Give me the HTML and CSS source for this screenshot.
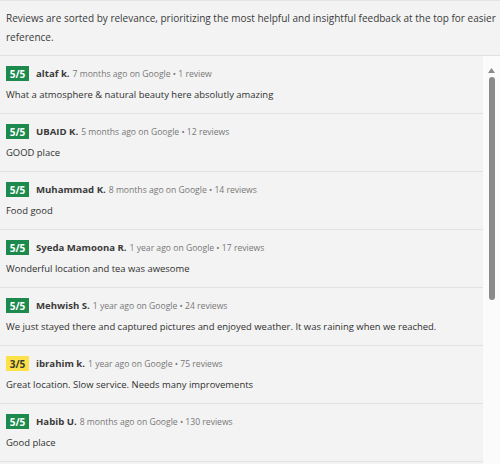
FILE: index.html
```html
<!DOCTYPE html>
<html lang="en">
<head>
<meta charset="utf-8">
<title>Reviews</title>
<link rel="stylesheet" href="styles.css">
</head>
<body>
<div class="panel">
  <p class="intro">Reviews are sorted by relevance, prioritizing the most helpful and insightful feedback at the top for easier reference.</p>
  <div class="list-wrap">
    <ul class="list">
      <li class="review">
        <div class="head"><span class="badge good">5/5</span><span class="name">altaf k.</span><span class="meta">7 months ago on Google • 1 review</span></div>
        <p class="text">What a atmosphere &amp; natural beauty here absolutly amazing</p>
      </li>
      <li class="review">
        <div class="head"><span class="badge good">5/5</span><span class="name">UBAID K.</span><span class="meta">5 months ago on Google • 12 reviews</span></div>
        <p class="text">GOOD place</p>
      </li>
      <li class="review">
        <div class="head"><span class="badge good">5/5</span><span class="name">Muhammad K.</span><span class="meta">8 months ago on Google • 14 reviews</span></div>
        <p class="text">Food good</p>
      </li>
      <li class="review">
        <div class="head"><span class="badge good">5/5</span><span class="name">Syeda Mamoona R.</span><span class="meta">1 year ago on Google • 17 reviews</span></div>
        <p class="text">Wonderful location and tea was awesome</p>
      </li>
      <li class="review">
        <div class="head"><span class="badge good">5/5</span><span class="name">Mehwish S.</span><span class="meta">1 year ago on Google • 24 reviews</span></div>
        <p class="text">We just stayed there and captured pictures and enjoyed weather. It was raining when we reached.</p>
      </li>
      <li class="review">
        <div class="head"><span class="badge mid">3/5</span><span class="name">ibrahim k.</span><span class="meta">1 year ago on Google • 75 reviews</span></div>
        <p class="text">Great location. Slow service. Needs many improvements</p>
      </li>
      <li class="review">
        <div class="head"><span class="badge good">5/5</span><span class="name">Habib U.</span><span class="meta">8 months ago on Google • 130 reviews</span></div>
        <p class="text">Good place</p>
      </li>
    </ul>
    <div class="scrollbar">
      <svg class="arrow" width="7" height="5" viewBox="0 0 7 5"><path d="M0 5 L3.5 0 L7 5 Z" fill="#8a8a8a"/></svg>
      <div class="thumb"></div>
    </div>
  </div>
</div>
</body>
</html>
```

FILE: styles.css
```css
* { box-sizing: border-box; }
html, body {
  margin: 0;
  padding: 0;
  height: 100%;
  overflow: hidden;
  background: #f3f3f3;
}
body {
  font-family: "Open Sans", "Noto Sans", sans-serif;
  color: #333;
  font-size: 10px;
}
.panel {
  height: 464px;
  display: flex;
  flex-direction: column;
  border-top: 1px solid #e4e4e4;
}
.intro {
  margin: 0;
  padding: 8px 0 8px 6px;
  line-height: 19px;
  font-size: 10px;
  color: #3a3a3a;
  border-bottom: 1px solid #e0e0e0;
}
.list-wrap {
  flex: 1;
  display: flex;
  min-height: 0;
}
.list {
  list-style: none;
  margin: 0;
  padding: 0;
  flex: 1;
  min-width: 0;
}
.review {
  padding: 10px 0 9px 6px;
  border-bottom: 1px solid #e2e2e2;
}
.head {
  display: flex;
  align-items: center;
  height: 15px;
  white-space: nowrap;
}
.badge {
  display: inline-flex;
  align-items: center;
  justify-content: center;
  width: 23px;
  height: 15px;
  font-size: 10px;
  font-weight: 700;
  margin-right: 7px;
}
.badge.good { background: #1c8a4c; color: #fff; }
.badge.mid { background: #fde14a; color: #3a3a2a; }
.name {
  font-weight: 700;
  color: #3a3a3a;
  font-size: 9.6px;
  margin-right: 3px;
}
.meta {
  color: #777;
  font-size: 8.6px;
}
.text {
  margin: 5px 0 0;
  line-height: 18px;
  font-size: 9.45px;
  color: #303030;
  white-space: nowrap;
}
.scrollbar {
  width: 17px;
  flex: none;
  background: #fbfbfb;
  display: flex;
  flex-direction: column;
  align-items: center;
  padding-top: 12px;
}
.arrow { display: block; }
.thumb {
  margin-top: 4px;
  width: 6px;
  height: 223px;
  border-radius: 3px;
  background: #8a8a8a;
}
```
